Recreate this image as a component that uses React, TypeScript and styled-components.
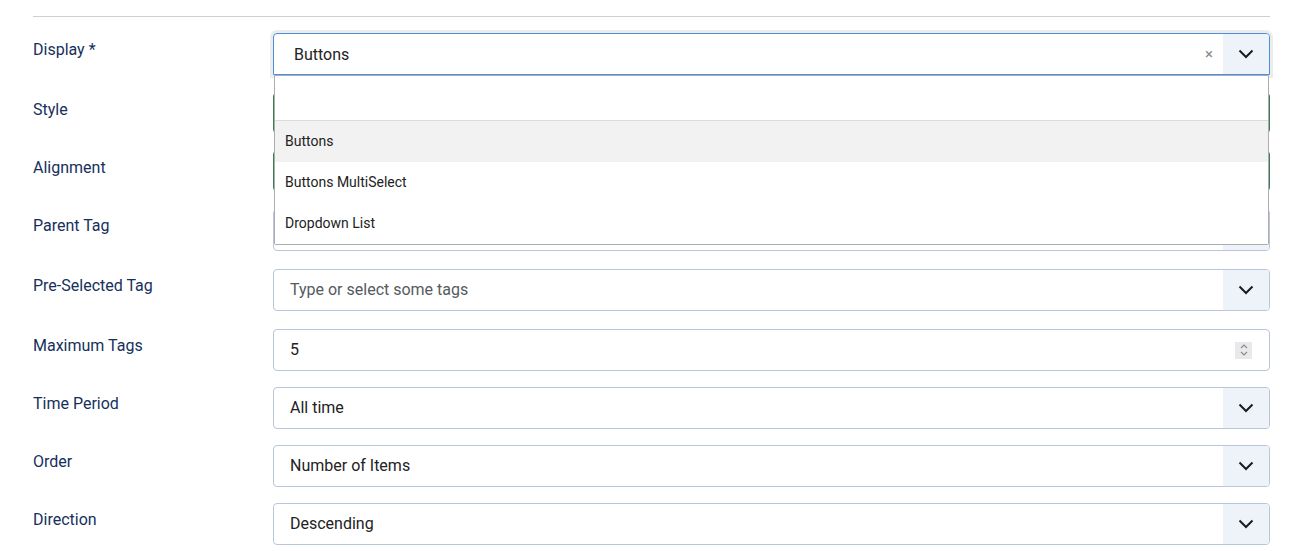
import React from "react";
import styled, { createGlobalStyle } from "styled-components";

const GlobalStyle = createGlobalStyle`
  body {
    margin: 0;
    background: #ffffff;
    font-family: Roboto, "Liberation Sans", sans-serif;
  }
`;

const Chevron = () => (
  <svg width="16" height="10" viewBox="0 0 16 10" fill="none">
    <polyline points="1.5,1.5 8,8 14.5,1.5" stroke="#1c1c1c" strokeWidth="2" />
  </svg>
);

const Spinner = () => (
  <svg width="10" height="14" viewBox="0 0 10 14" fill="none">
    <polyline points="2,5 5,2 8,5" stroke="#8a8a8a" strokeWidth="1.1" />
    <polyline points="2,9 5,12 8,9" stroke="#8a8a8a" strokeWidth="1.1" />
  </svg>
);

type FieldRow = {
  label: string;
  kind: "choices" | "select" | "number" | "switcher";
  value?: string;
  placeholder?: string;
};

const rows: FieldRow[] = [
  { label: "Style", kind: "switcher" },
  { label: "Alignment", kind: "switcher" },
  { label: "Parent Tag", kind: "choices" },
  { label: "Pre-Selected Tag", kind: "choices", placeholder: "Type or select some tags" },
  { label: "Maximum Tags", kind: "number", value: "5" },
  { label: "Time Period", kind: "select", value: "All time" },
  { label: "Order", kind: "select", value: "Number of Items" },
  { label: "Direction", kind: "select", value: "Descending" },
];

const options = ["Buttons", "Buttons MultiSelect", "Dropdown List"];

const App = () => {
  return (
    <Page>
      <GlobalStyle />
      <Divider />
      <Row $gap={18}>
        <Label>Display *</Label>
        <Control>
          <OpenSelect>
            <OpenValue>Buttons</OpenValue>
            <Clear>×</Clear>
            <ArrowBox>
              <Chevron />
            </ArrowBox>
          </OpenSelect>
          <Dropdown>
            <SearchArea />
            {options.map((o, i) => (
              <Option key={o} $active={i === 0}>
                {o}
              </Option>
            ))}
          </Dropdown>
        </Control>
      </Row>
      {rows.map((r) => (
        <Row key={r.label} $gap={r.kind === "choices" ? 18 : 16}>
          <Label>{r.label}</Label>
          <Control>
            {r.kind === "switcher" && <Switcher />}
            {r.kind === "number" && (
              <Box>
                <Value>{r.value}</Value>
                <SpinBox>
                  <Spinner />
                </SpinBox>
              </Box>
            )}
            {(r.kind === "select" || r.kind === "choices") && (
              <Box>
                {r.placeholder ? (
                  <Placeholder>{r.placeholder}</Placeholder>
                ) : (
                  <Value>{r.value}</Value>
                )}
                <ArrowBox>
                  <Chevron />
                </ArrowBox>
              </Box>
            )}
          </Control>
        </Row>
      ))}
    </Page>
  );
};

export default App;

const Page = styled.div`
  padding: 16px 23px 0 33px;
`;

const Divider = styled.div`
  height: 1px;
  background: #cfcfcf;
  margin-bottom: 16px;
`;

const Row = styled.div<{ $gap: number }>`
  display: flex;
  align-items: flex-start;
  margin-bottom: ${({ $gap }) => $gap}px;
`;

const Label = styled.div`
  width: 240px;
  flex-shrink: 0;
  padding-top: 7px;
  font-size: 16px;
  line-height: 20px;
  color: #16305c;
`;

const Control = styled.div`
  position: relative;
  flex: 1;
`;

const Box = styled.div`
  height: 42px;
  box-sizing: border-box;
  border: 1px solid #b9c5da;
  border-radius: 4px;
  display: flex;
  align-items: center;
  overflow: hidden;
  background: #fff;
`;

const OpenSelect = styled(Box)`
  border-color: #4a8fe0;
  border-radius: 4px 4px 0 0;
  box-shadow: 0 0 0 3px #ececec;
`;

const Value = styled.div`
  flex: 1;
  padding-left: 16px;
  padding-bottom: 2px;
  font-size: 16px;
  color: #222;
`;

const OpenValue = styled(Value)`
  padding-left: 20px;
  padding-bottom: 0;
`;

const Placeholder = styled(Value)`
  color: #555a60;
`;

const Clear = styled.div`
  width: 20px;
  font-size: 15px;
  color: #8a8a8a;
  text-align: center;
  margin-right: 4px;
`;

const ArrowBox = styled.div`
  width: 46px;
  align-self: stretch;
  background: #eef3fa;
  display: flex;
  align-items: center;
  justify-content: center;
`;

const SpinBox = styled.div`
  width: 17px;
  height: 17px;
  margin-right: 17px;
  background: #e9e9ec;
  display: flex;
  align-items: center;
  justify-content: center;
`;

const Switcher = styled.div`
  height: 40px;
  box-sizing: border-box;
  border: 2px solid #3d7a56;
  border-radius: 4px;
  margin-bottom: 2px;
`;

const Dropdown = styled.div`
  position: absolute;
  top: 42px;
  left: 1px;
  right: 1px;
  z-index: 5;
  background: #fff;
  border: 1px solid #adadad;
  border-radius: 0 0 2px 2px;
`;

const SearchArea = styled.div`
  height: 44px;
  border-bottom: 1px solid #dcdcdc;
`;

const Option = styled.div<{ $active: boolean }>`
  height: 41px;
  box-sizing: border-box;
  padding-bottom: 2px;
  display: flex;
  align-items: center;
  padding-left: 10px;
  font-size: 14px;
  color: #222;
  background: ${({ $active }) => ($active ? "#f2f2f2" : "#fff")};
`;
